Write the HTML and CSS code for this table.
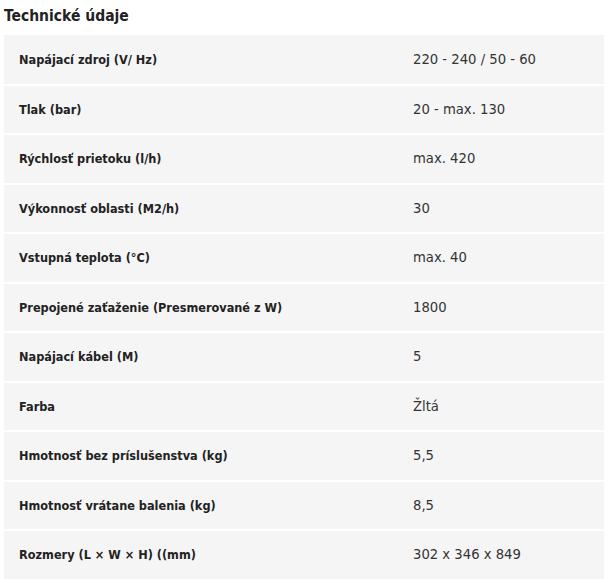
FILE: index.html
```html
<!DOCTYPE html>
<html lang="sk">
<head>
<meta charset="utf-8">
<link rel="stylesheet" href="styles.css">
</head>
<body>
<h2 class="title">Technické údaje</h2>
<table class="specs">
<tbody>
<tr><th>Napájací zdroj (V/ Hz)</th><td>220 - 240 / 50 - 60</td></tr>
<tr><th>Tlak (bar)</th><td>20 - max. 130</td></tr>
<tr><th>Rýchlosť prietoku (l/h)</th><td>max. 420</td></tr>
<tr><th>Výkonnosť oblasti (M2/h)</th><td>30</td></tr>
<tr><th>Vstupná teplota (°C)</th><td>max. 40</td></tr>
<tr><th>Prepojené zaťaženie (Presmerované z W)</th><td>1800</td></tr>
<tr><th>Napájací kábel (M)</th><td>5</td></tr>
<tr><th>Farba</th><td>Žltá</td></tr>
<tr><th>Hmotnosť bez príslušenstva (kg)</th><td>5,5</td></tr>
<tr><th>Hmotnosť vrátane balenia (kg)</th><td>8,5</td></tr>
<tr><th>Rozmery (L × W × H) ((mm)</th><td>302 x 346 x 849</td></tr>
</tbody>
</table>
</body>
</html>
```
FILE: styles.css
```css
html, body {
  margin: 0;
  padding: 0;
  background: #fff;
}
body {
  padding: 4px 4px 0 4px;
  font-family: "DejaVu Sans Condensed", "DejaVu Sans", sans-serif;
  color: #222;
}
.title {
  margin: 0;
  font-size: 15.5px;
  font-weight: bold;
  line-height: 24px;
  height: 31px;
  color: #222;
}
.specs {
  width: 600px;
  border-collapse: collapse;
  table-layout: fixed;
}
.specs tr {
  background: #f5f5f5;
  border-bottom: 2px solid #fff;
}
.specs th, .specs td {
  height: 49.5px;
  padding: 0 15px;
  box-sizing: border-box;
  text-align: left;
  vertical-align: middle;
  font-size: 13px;
}
.specs th {
  width: 394px;
  font-size: 12.6px;
  font-weight: bold;
  color: #222;
}
.specs td {
  font-family: "DejaVu Sans", sans-serif;
  font-size: 13.2px;
  font-weight: normal;
  color: #333;
}
```
